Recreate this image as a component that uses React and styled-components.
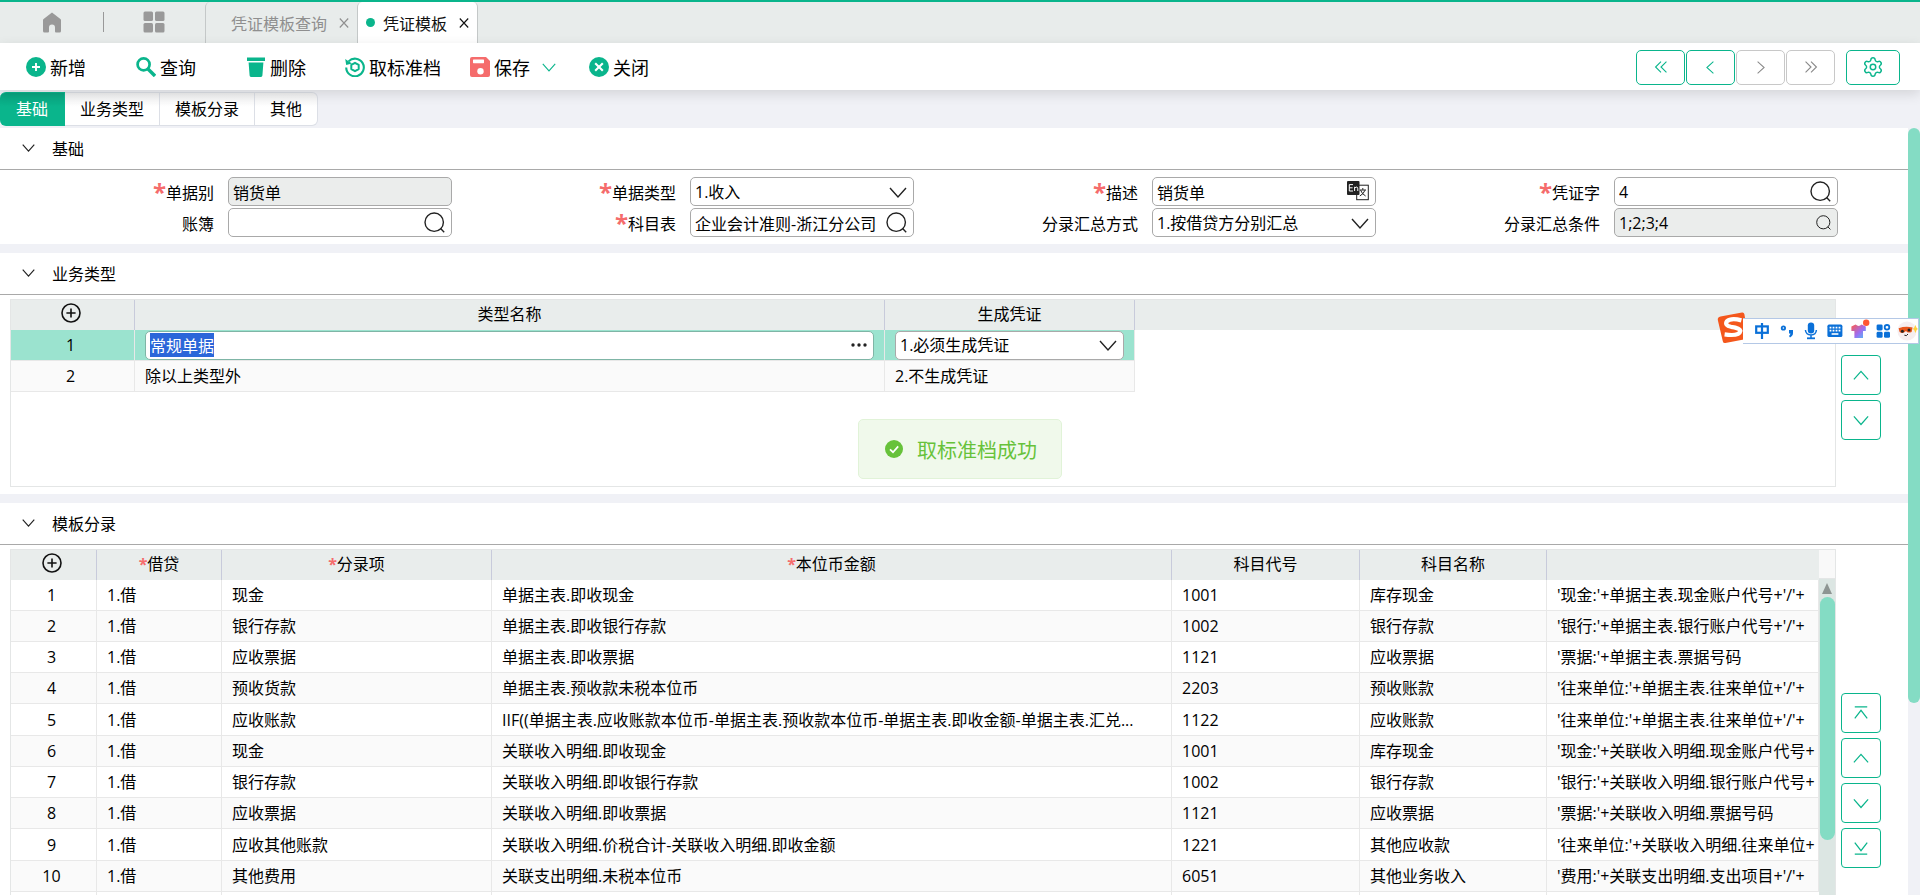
import React, { useEffect, useRef, useState } from "react";
import styled, { createGlobalStyle, css } from "styled-components";
import { Settings } from "lucide-react";

const GREEN = "#0ab58c";
const RED = "#f56c6c";

const anchors = ["基础", "业务类型", "模板分录", "其他"];

const entryRows = [
  ["1.借", "现金", "单据主表.即收现金", "1001", "库存现金", "'现金:'+单据主表.现金账户代号+'/'+"],
  ["1.借", "银行存款", "单据主表.即收银行存款", "1002", "银行存款", "'银行:'+单据主表.银行账户代号+'/'+"],
  ["1.借", "应收票据", "单据主表.即收票据", "1121", "应收票据", "'票据:'+单据主表.票据号码"],
  ["1.借", "预收货款", "单据主表.预收款未税本位币", "2203", "预收账款", "'往来单位:'+单据主表.往来单位+'/'+"],
  [
    "1.借",
    "应收账款",
    "IIF((单据主表.应收账款本位币-单据主表.预收款本位币-单据主表.即收金额-单据主表.汇兑...",
    "1122",
    "应收账款",
    "'往来单位:'+单据主表.往来单位+'/'+",
  ],
  ["1.借", "现金", "关联收入明细.即收现金", "1001", "库存现金", "'现金:'+关联收入明细.现金账户代号+"],
  ["1.借", "银行存款", "关联收入明细.即收银行存款", "1002", "银行存款", "'银行:'+关联收入明细.银行账户代号+"],
  ["1.借", "应收票据", "关联收入明细.即收票据", "1121", "应收票据", "'票据:'+关联收入明细.票据号码"],
  ["1.借", "应收其他账款", "关联收入明细.价税合计-关联收入明细.即收金额", "1221", "其他应收款", "'往来单位:'+关联收入明细.往来单位+"],
  ["1.借", "其他费用", "关联支出明细.未税本位币", "6051", "其他业务收入", "'费用:'+关联支出明细.支出项目+'/'+"],
  ["", "", "", "", "", ""],
];

/* ---------- icons ---------- */

const HomeIcon = () => (
  <svg width="20" height="21" viewBox="0 0 20 21" fill="#999">
    <path d="M10 0.5 L18.4 7 Q19 7.5 19 8.3 V19 Q19 20.5 17.5 20.5 H14 Q13 20.5 13 19.5 V15.5 A3 3 0 0 0 7 15.5 V19.5 Q7 20.5 6 20.5 H2.5 Q1 20.5 1 19 V8.3 Q1 7.5 1.6 7 Z" />
  </svg>
);

const AppsIcon = () => (
  <svg width="22" height="22" viewBox="0 0 22 22" fill="#999">
    <rect x="0.5" y="0.5" width="9.5" height="9.5" rx="1.5" />
    <rect x="12" y="0.5" width="9.5" height="9.5" rx="1.5" />
    <rect x="0.5" y="12" width="9.5" height="9.5" rx="1.5" />
    <rect x="12" y="12" width="9.5" height="9.5" rx="1.5" />
  </svg>
);

const CrossIcon = () => (
  <svg width="10" height="10" viewBox="0 0 10 10" stroke="currentColor" strokeWidth="1.1">
    <path d="M0.8 0.5 L9.2 9.5 M9.2 0.5 L0.8 9.5" />
  </svg>
);

const AddIcon = () => (
  <svg width="20" height="20" viewBox="0 0 20 20">
    <circle cx="10" cy="10" r="10" fill={GREEN} />
    <path d="M10 6 V14 M6 10 H14" stroke="#fff" strokeWidth="1.9" />
  </svg>
);

const FindIcon = () => (
  <svg width="20" height="20" viewBox="0 0 20 20" fill="none" stroke={GREEN}>
    <circle cx="7.6" cy="7.4" r="6" strokeWidth="2.7" />
    <path d="M12 12 L19 19" strokeWidth="3.4" />
  </svg>
);

const TrashIcon = () => (
  <svg width="20" height="20" viewBox="0 0 20 20" fill={GREEN}>
    <path d="M1 0.5 H19 V4 H1 Z M2.6 5.4 H17.4 L16.4 18.6 Q16.3 20 15 20 H5 Q3.7 20 3.6 18.6 Z" />
  </svg>
);

const ResetIcon = () => (
  <svg width="20" height="20" viewBox="0 0 20 20" fill="none" stroke={GREEN}>
    <path d="M3.6 4.4 A8.8 8.8 0 1 1 1.2 10.5" strokeWidth="2.1" />
    <path d="M0.2 2 L1.2 8 L7 6.6 Z" fill={GREEN} stroke="none" />
    <path d="M10 5.8 L13.7 7.9 V12.1 L10 14.2 L6.3 12.1 V7.9 Z" strokeWidth="2" strokeLinejoin="round" />
  </svg>
);

const SaveIcon = () => (
  <svg width="20" height="20" viewBox="0 0 20 20">
    <path d="M2 0 H16 L20 4 V18 Q20 20 18 20 H2 Q0 20 0 18 V2 Q0 0 2 0 Z" fill={RED} />
    <rect x="3" y="2.4" width="11" height="3.8" rx="0.6" fill="#fff" />
    <circle cx="10.5" cy="14.3" r="3.2" fill="#fff" />
  </svg>
);

const CloseIcon = () => (
  <svg width="20" height="20" viewBox="0 0 20 20">
    <circle cx="10" cy="10" r="10" fill={GREEN} />
    <path d="M6.2 6.2 L13.8 13.8 M13.8 6.2 L6.2 13.8" stroke="#fff" strokeWidth="2.1" />
  </svg>
);

const chevrons = {
  down: "M1 5 L9 14 L17 5",
  up: "M1 14 L9 5 L17 14",
  left: "M13 1 L4 9 L13 17",
  right: "M5 1 L14 9 L5 17",
  first: "M9 2 L2 9 L9 16 M16 2 L9 9 L16 16",
  last: "M2 2 L9 9 L2 16 M9 2 L16 9 L9 16",
  top: "M2 2 H16 M2 15 L9 6 L16 15",
  bottom: "M2 16 H16 M2 3 L9 12 L16 3",
};

const Chevron = ({ dir, size = 18, weight = 1.4 }) => (
  <svg width={size} height={size} viewBox="0 0 18 18" fill="none" stroke="currentColor" strokeWidth={weight}>
    <path d={chevrons[dir]} />
  </svg>
);

const LensIcon = ({ size = 21 }) => (
  <svg width={size} height={size} viewBox="0 0 21 21" fill="none" stroke="#222" strokeWidth="1.4">
    <circle cx="10.2" cy="10.2" r="9.2" />
    <path d="M16.6 16.6 L20.2 20.2" />
  </svg>
);

const TranslateIcon = () => (
  <svg width="22" height="24" viewBox="0 0 22 24">
    <rect x="9.7" y="5.2" width="11.6" height="14.5" fill="#fff" stroke="#222" />
    <path d="M15.8 8 V9.8 M12.8 10 H19 M13.6 10.2 Q15 14 18.6 16 M18 10.2 Q16.6 14 12.8 16" stroke="#222" fill="none" />
    <rect y="1" width="12.5" height="14" rx="1" fill="#222" />
    <path d="M6 4.6 H2.3 V11 H6 M2.3 7.8 H5.6 M7.6 11 V6.8 M7.6 8 Q10.8 5.6 10.8 8.8 V11" stroke="#fff" fill="none" />
  </svg>
);

const PlusRing = () => (
  <svg width="20" height="20" viewBox="0 0 20 20" fill="none" stroke="#111" strokeWidth="1.6">
    <circle cx="10" cy="10" r="9" />
    <path d="M10 5.4 V14.6 M5.4 10 H14.6" />
  </svg>
);

const DotsIcon = () => (
  <svg width="16" height="6" viewBox="0 0 16 6" fill="#222">
    <circle cx="2" cy="3" r="1.7" />
    <circle cx="8" cy="3" r="1.7" />
    <circle cx="14" cy="3" r="1.7" />
  </svg>
);

const CheckIcon = () => (
  <svg width="18" height="18" viewBox="0 0 18 18">
    <circle cx="9" cy="9" r="9" fill="#67c23a" />
    <path d="M5 9.4 L8 12.2 L13.2 6.4" stroke="#fff" strokeWidth="1.7" fill="none" />
  </svg>
);

const SogouLogo = () => (
  <svg width="32" height="32" viewBox="0 0 32 32">
    <path d="M3.5 4.6 L25 0.6 Q27 0.3 27.4 2.2 L31 24.6 Q31.3 26.6 29.3 27 L8.4 31 Q6.2 31.3 5.8 29.2 L0.8 8 Q0.4 5.2 3.5 4.6 Z" fill="#f4571c" />
    <path
      d="M24.4 8.4 Q14 5.6 9.8 9.4 Q7.4 13.4 14 14.8 Q22.6 16 23.4 18.8 Q22.4 24.4 7.6 22.4"
      stroke="#fff"
      strokeWidth="4.2"
      fill="none"
    />
  </svg>
);

const ImeIcons = () => (
  <svg width="164" height="24" viewBox="0 0 164 24">
    <g fill="none" stroke="#0a70d8" strokeWidth="2.2">
      <rect x="2.2" y="7.4" width="11.6" height="6.4" />
      <path d="M8 4 V20" />
      <circle cx="29.4" cy="9" r="1.7" strokeWidth="1.8" />
      <path d="M51.4 11 Q52 16 57 16 Q62 16 62.4 11 M57 16 V19.4" strokeWidth="1.5" />
    </g>
    <g fill="#0a70d8">
      <path d="M35 11 H39 V14 Q39 17 36 18.4 L35 17 Q36.4 16 36.4 14.6 H35 Z" />
      <rect x="53.8" y="3.4" width="6.4" height="11" rx="3.2" />
      <rect x="53" y="18.4" width="8" height="1.8" />
      <rect x="73.4" y="5.6" width="15" height="12.4" rx="1.6" />
      <rect x="122.6" y="5.4" width="6" height="6" rx="1.4" />
      <circle cx="133" cy="8.3" r="2.3" fill="none" stroke="#0a70d8" strokeWidth="1.8" />
      <rect x="122.6" y="12.8" width="6" height="6" rx="1.4" />
      <rect x="130" y="12.8" width="6" height="6" rx="1.4" />
    </g>
    <path d="M75.6 8.6 H86.6 M75.6 11.6 H86.6" stroke="#fff" strokeWidth="1.6" strokeDasharray="1.8 1.2" />
    <path d="M77.6 15 H84.4" stroke="#fff" strokeWidth="1.6" />
    <linearGradient id="shirt" x1="0" y1="0" x2="1" y2="1">
      <stop offset="0" stopColor="#ff5a4a" />
      <stop offset="0.55" stopColor="#a06cf0" />
      <stop offset="1" stopColor="#4ac4f8" />
    </linearGradient>
    <path d="M97.4 7.4 L101.6 5.6 Q104.6 8.4 107.6 5.6 L111.8 7.4 V12 H109 V19 H100.4 V12 H97.4 Z" fill="url(#shirt)" />
    <circle cx="112.2" cy="3.8" r="3.2" fill="#ff5533" />
    <circle cx="153" cy="12" r="9.6" fill="#f6eef0" />
    <path d="M144.6 9.2 Q152 6.6 158.6 8.6 L157.6 13 Q153.4 14.4 152 12 Q148.6 15.4 145.6 13 Z" fill="#e8561c" />
    <circle cx="148.4" cy="12.2" r="1.5" fill="#222" />
    <circle cx="155" cy="11" r="1.5" fill="#222" />
    <path d="M150.4 16.2 Q152.6 17.6 154 15" stroke="#222" fill="none" />
    <path d="M161.4 6 L162.6 8.8 L164 10 L162.6 11 L161.4 14 L160.2 11 L158.8 10 L160.2 8.8 Z" fill="#ffd23c" />
  </svg>
);

/* ---------- pieces ---------- */

const Section = ({ title, children }) => (
  <Panel>
    <PanelHead>
      <FoldButton type="button" aria-label={`收起${title}`}>
        <Chevron dir="down" size={13} weight={1.6} />
      </FoldButton>
      <PanelTitle>{title}</PanelTitle>
    </PanelHead>
    {children}
  </Panel>
);

const Field = ({ id, label, required, value, options, icon, disabled }) => (
  <FieldRow>
    <FieldLabel htmlFor={id}>
      {required && <Star>*</Star>}
      {label}
    </FieldLabel>
    <Box $disabled={disabled}>
      {options ? (
        <Select id={id} defaultValue={value}>
          {options.map((option) => (
            <option key={option}>{option}</option>
          ))}
        </Select>
      ) : (
        <Input id={id} defaultValue={value} readOnly={disabled} />
      )}
      {icon}
    </Box>
  </FieldRow>
);

const App = () => {
  const [anchor, setAnchor] = useState("基础");
  const typeInput = useRef(null);

  useEffect(() => {
    typeInput.current.focus();
    typeInput.current.select();
  }, []);

  return (
    <>
      <GlobalStyle />
      <Page>
        <TabBar>
          <HomeButton type="button" aria-label="首页">
            <HomeIcon />
          </HomeButton>
          <Divider />
          <HomeButton type="button" aria-label="应用">
            <AppsIcon />
          </HomeButton>
          <PageTab>
            凭证模板查询
            <TabClose type="button" aria-label="关闭凭证模板查询">
              <CrossIcon />
            </TabClose>
          </PageTab>
          <PageTab $active>
            <Dot />
            凭证模板
            <TabClose type="button" aria-label="关闭凭证模板">
              <CrossIcon />
            </TabClose>
          </PageTab>
        </TabBar>

        <Toolbar>
          <Actions>
            <Action type="button"><AddIcon />新增</Action>
            <Action type="button"><FindIcon />查询</Action>
            <Action type="button"><TrashIcon />删除</Action>
            <Action type="button" $tight><ResetIcon />取标准档</Action>
            <Action type="button" $tight>
              <SaveIcon />保存
              <SaveMore>
                <Chevron dir="down" size={14} />
              </SaveMore>
            </Action>
            <Action type="button"><CloseIcon />关闭</Action>
          </Actions>
          <Pager>
            <PagerButton type="button" aria-label="第一条"><Chevron dir="first" size={14} /></PagerButton>
            <PagerButton type="button" aria-label="上一条"><Chevron dir="left" size={13} /></PagerButton>
            <PagerButton type="button" aria-label="下一条" disabled><Chevron dir="right" size={13} /></PagerButton>
            <PagerButton type="button" aria-label="最后一条" disabled><Chevron dir="last" size={14} /></PagerButton>
          </Pager>
          <PagerButton type="button" aria-label="设置" $wide>
            <Settings size={22} strokeWidth={1.6} />
          </PagerButton>
        </Toolbar>

        <AnchorBar>
          {anchors.map((name) => (
            <Anchor type="button" key={name} $active={name === anchor} onClick={() => setAnchor(name)}>
              {name}
            </Anchor>
          ))}
        </AnchorBar>

        <Body>
          <Main>
            <Section title="基础">
              <Form>
                <Field id="kind" label="单据别" required value="销货单" disabled />
                <Field id="docType" label="单据类型" required value="1.收入" options={["1.收入"]} icon={<Chevron dir="down" />} />
                <Field id="desc" label="描述" required value="销货单" icon={<TranslateIcon />} />
                <Field id="word" label="凭证字" required value="4" icon={<LensIcon />} />
                <Field id="book" label="账簿" value="" icon={<LensIcon />} />
                <Field id="subject" label="科目表" required value="企业会计准则-浙江分公司" icon={<LensIcon />} />
                <Field id="sumMode" label="分录汇总方式" value="1.按借贷方分别汇总" options={["1.按借贷方分别汇总"]} icon={<Chevron dir="down" />} />
                <Field id="sumRule" label="分录汇总条件" value="1;2;3;4" disabled icon={<LensIcon size={15} />} />
              </Form>
            </Section>

            <Section title="业务类型">
              <GridArea>
                <GridBox $height={188}>
                  <GridScroll>
                    <Table>
                      <colgroup>
                        <col width="124" />
                        <col width="750" />
                        <col width="250" />
                        <col />
                      </colgroup>
                      <thead>
                        <tr>
                          <Th $index><RingButton type="button" aria-label="新增业务类型"><PlusRing /></RingButton></Th>
                          <Th>类型名称</Th>
                          <Th>生成凭证</Th>
                          <Th $bare />
                        </tr>
                      </thead>
                      <tbody>
                        <Row $selected>
                          <IndexTd>1</IndexTd>
                          <Td>
                            <Box $focus>
                              <Input ref={typeInput} defaultValue="常规单据" aria-label="类型名称" />
                              <DotsIcon />
                            </Box>
                          </Td>
                          <Td>
                            <Box>
                              <Select aria-label="生成凭证" defaultValue="1.必须生成凭证">
                                <option>1.必须生成凭证</option>
                                <option>2.不生成凭证</option>
                              </Select>
                              <Chevron dir="down" />
                            </Box>
                          </Td>
                          <Td />
                        </Row>
                        <Row>
                          <IndexTd>2</IndexTd>
                          <Td>除以上类型外</Td>
                          <Td>2.不生成凭证</Td>
                          <Td />
                        </Row>
                      </tbody>
                    </Table>
                  </GridScroll>
                </GridBox>
                <Side>
                  <SideButton type="button" aria-label="上移"><Chevron dir="up" size={16} /></SideButton>
                  <SideButton type="button" aria-label="下移"><Chevron dir="down" size={16} /></SideButton>
                </Side>
              </GridArea>
            </Section>

            <Section title="模板分录">
              <GridArea>
                <GridBox $height={454}>
                  <GridScroll>
                    <Table>
                      <colgroup>
                        <col width="86" />
                        <col width="125" />
                        <col width="270" />
                        <col width="680" />
                        <col width="188" />
                        <col width="187" />
                        <col />
                      </colgroup>
                      <thead>
                        <tr>
                          <Th $index><RingButton type="button" aria-label="新增分录"><PlusRing /></RingButton></Th>
                          <Th><SmallStar>*</SmallStar>借贷</Th>
                          <Th><SmallStar>*</SmallStar>分录项</Th>
                          <Th><SmallStar>*</SmallStar>本位币金额</Th>
                          <Th>科目代号</Th>
                          <Th>科目名称</Th>
                          <Th $bare />
                        </tr>
                      </thead>
                      <tbody>
                        {entryRows.map((cells, i) => (
                          <Row key={i}>
                            <IndexTd>{cells[0] && i + 1}</IndexTd>
                            {cells.map((cell, j) => (
                              <Td key={j} $clip={j === 5}>{cell}</Td>
                            ))}
                          </Row>
                        ))}
                      </tbody>
                    </Table>
                  </GridScroll>
                  <Rail>
                    <RailHead />
                    <RailArrow viewBox="0 0 10 11"><path d="M5 0 L10 11 H0 Z" /></RailArrow>
                    <RailThumb />
                  </Rail>
                </GridBox>
                <Side>
                  <SideButton type="button" aria-label="移到最前"><Chevron dir="top" size={16} /></SideButton>
                  <SideButton type="button" aria-label="上移"><Chevron dir="up" size={16} /></SideButton>
                  <SideButton type="button" aria-label="下移"><Chevron dir="down" size={16} /></SideButton>
                  <SideButton type="button" aria-label="移到最后"><Chevron dir="bottom" size={16} /></SideButton>
                </Side>
              </GridArea>
            </Section>
          </Main>
          <PageRail>
            <PageThumb />
          </PageRail>
        </Body>
      </Page>

      <Toast role="status">
        <CheckIcon />
        取标准档成功
      </Toast>

      <ImeBar>
        <SogouLogo />
        <ImePanel>
          <ImeIcons />
        </ImePanel>
      </ImeBar>
    </>
  );
};

/* ---------- styles ---------- */

const GlobalStyle = createGlobalStyle`
  * {
    box-sizing: border-box;
  }
  body {
    margin: 0;
    overflow: hidden;
    background: #f0f1f6;
    color: #000;
  }
  body, button, input, select {
    font-family: "Open Sans", "Noto Sans CJK SC", sans-serif;
    font-size: 16px;
  }
  button {
    padding: 0;
    border: none;
    background: none;
    color: inherit;
    cursor: pointer;
  }
  svg {
    display: block;
    flex-shrink: 0;
  }
  ::selection {
    background: #2b66d9;
    color: #fff;
  }
`;

const Page = styled.div`
  display: flex;
  flex-direction: column;
  height: 100vh;
  overflow: hidden;
  border-top: 2px solid ${GREEN};
`;

const TabBar = styled.div`
  display: flex;
  align-items: center;
  flex-shrink: 0;
  height: 41px;
  padding-bottom: 1px;
  background: #e8eceb;
`;

const HomeButton = styled.button`
  display: flex;
  justify-content: center;
  width: 103px;
`;

const Divider = styled.span`
  width: 1px;
  height: 20px;
  margin-right: -2px;
  background: #999;
`;

const PageTab = styled.div`
  display: flex;
  align-items: center;
  align-self: stretch;
  gap: 12px;
  margin-bottom: -1px;
  padding: 0 8px 0 25px;
  color: #8f8f8f;
  border-left: 1px solid #c4c8c8;
  border-radius: 5px 0 0 0;

  ${({ $active }) =>
    $active &&
    css`
      gap: 8px;
      padding: 0 8px;
      color: #111;
      background: #fff;
      border-right: 1px solid #c4c8c8;
      border-radius: 5px 5px 0 0;
    `}
`;

const Dot = styled.span`
  width: 9px;
  height: 9px;
  border-radius: 50%;
  background: ${GREEN};

  & + button {
    margin-left: 4px;
  }
`;

const TabClose = styled.button``;

const Toolbar = styled.div`
  position: relative;
  display: flex;
  align-items: center;
  flex-shrink: 0;
  height: 47px;
  padding: 1px 20px 0 26px;
  background: #fff;
  box-shadow: 0 4px 12px rgba(0, 0, 0, 0.12);
`;

const Actions = styled.div`
  display: flex;
  align-items: center;
  flex: 1;
`;

const Action = styled.button`
  display: flex;
  align-items: center;
  gap: 4px;
  height: 36px;
  margin-right: 50px;
  font-size: 18px;

  ${({ $tight }) =>
    $tight &&
    css`
      margin-right: 29px;
    `}

  &:nth-child(3) {
    margin-right: 39px;
  }
`;

const SaveMore = styled.span`
  margin-left: 8px;
  margin-right: 4px;
  color: ${GREEN};
`;

const Pager = styled.div`
  display: flex;
  gap: 1px;
  margin-right: 11px;
`;

const PagerButton = styled.button`
  display: flex;
  align-items: center;
  justify-content: center;
  width: ${({ $wide }) => ($wide ? 54 : 49)}px;
  height: 35px;
  color: ${GREEN};
  background: #fff;
  border: 1px solid ${GREEN};
  border-radius: 5px;

  &:disabled {
    color: #888;
    border-color: #c8c8c8;
  }
`;

const AnchorBar = styled.div`
  display: flex;
  flex-shrink: 0;
  padding: 2px 0;
`;

const Anchor = styled.button`
  height: 34px;
  padding: 0 15px 2px;
  background: linear-gradient(#f0f0f1, #fff 14px);
  border: 1px solid #dcdfe6;
  border-left: none;

  &:first-child {
    padding: 0 16px 2px;
    border-radius: 6px 0 0 6px;
  }
  &:last-child {
    border-radius: 0 6px 6px 0;
  }

  ${({ $active }) =>
    $active &&
    css`
      color: #fff;
      background: linear-gradient(#0aa480, ${GREEN} 14px);
      border-color: ${GREEN};
    `}
`;

const Body = styled.div`
  display: flex;
  flex: 1;
  min-height: 0;
`;

const Main = styled.main`
  display: flex;
  flex-direction: column;
  flex: 1;
  gap: 9px;
  min-width: 0;
  overflow: hidden;
`;

const Panel = styled.section`
  flex-shrink: 0;
  background: #fff;
`;

const PanelHead = styled.div`
  display: flex;
  align-items: center;
  gap: 17px;
  height: 42px;
  padding: 0 22px 2px;
  border-bottom: 1px solid #a9a9a9;
`;

const FoldButton = styled.button`
  color: #222;
`;

const PanelTitle = styled.h2`
  margin: 0;
  font-size: 16px;
  font-weight: 400;
`;

const Form = styled.div`
  display: grid;
  grid-template-columns: repeat(4, 1fr);
  row-gap: 2px;
  padding: 7px 60px 7px 0;
`;

const FieldRow = styled.div`
  display: grid;
  grid-template-columns: 1fr 224px;
  gap: 14px;
  align-items: center;
  padding-right: 10px;
`;

const FieldLabel = styled.label`
  display: flex;
  align-items: center;
  justify-content: flex-end;
  height: 29px;
`;

const Star = styled.span`
  color: ${RED};
  font-size: 24px;
  font-weight: 700;
  line-height: 29px;
`;

const SmallStar = styled.span`
  color: ${RED};
  font-weight: 700;
`;

const Box = styled.div`
  display: flex;
  align-items: center;
  gap: 8px;
  height: 29px;
  padding: 0 6px 0 4px;
  background: ${({ $disabled }) => ($disabled ? "#ebedec" : "#fff")};
  border: 1px solid ${({ $focus }) => ($focus ? "#7fb5a6" : "#a9a9a9")};
  border-radius: 5px;
  color: #222;
`;

const fieldText = css`
  flex: 1;
  min-width: 0;
  height: 26px;
  padding: 0;
  color: #000;
  background: transparent;
  border: none;
  outline: none;
`;

const Input = styled.input`
  ${fieldText}
`;

const Select = styled.select`
  ${fieldText}
  appearance: none;
`;

const GridArea = styled.div`
  display: flex;
  gap: 5px;
  padding: 4px 27px 7px 10px;
`;

const GridBox = styled.div`
  display: flex;
  flex: 1;
  min-width: 0;
  height: ${({ $height }) => $height}px;
  border: 1px solid #e4e6e6;
`;

const GridScroll = styled.div`
  flex: 1;
  min-width: 0;
  overflow: hidden;
`;

const Table = styled.table`
  width: 100%;
  table-layout: fixed;
  border-spacing: 0;
`;

const Th = styled.th`
  height: 30px;
  padding: ${({ $index }) => ($index ? "0 4px 4px 0" : "0 0 2px")};
  font-weight: 400;
  line-height: 22px;
  background: #e9edec;
  border-right: ${({ $bare }) => ($bare ? "none" : "1px solid #c8cbdb")};
`;

const RingButton = styled.button`
  display: block;
  margin: 0 auto;
`;

const Td = styled.td`
  height: 31px;
  padding: 0 10px;
  line-height: 22px;
  white-space: nowrap;
  overflow: hidden;
  text-overflow: ellipsis;
  border-right: 1px solid #e8e8e8;
  border-bottom: 1px solid #e8e8e8;

  ${({ $clip }) =>
    $clip &&
    css`
      padding-right: 0;
      text-overflow: clip;
    `}
`;

const IndexTd = styled(Td)`
  padding: 0 14px 0 10px;
  text-align: center;
`;

const Row = styled.tr`
  background: ${({ $selected }) => ($selected ? "#9be3cf" : "#fff")};

  &:nth-child(even) {
    background: #fafafa;
  }

  &:nth-child(4n + 5) td {
    height: 32px;
  }

  td:empty:last-child {
    background: #fff;
    border: none;
  }
`;

const Side = styled.div`
  display: flex;
  flex-direction: column;
  justify-content: center;
  gap: 5px;
  padding-top: 8px;
`;

const SideButton = styled.button`
  display: flex;
  align-items: center;
  justify-content: center;
  width: 40px;
  height: 40px;
  color: ${GREEN};
  background: #fff;
  border: 1px solid ${GREEN};
  border-radius: 4px;
`;

const Rail = styled.div`
  display: flex;
  flex-direction: column;
  align-items: center;
  width: 16px;
  background: #dce6e3;
`;

const RailHead = styled.div`
  align-self: stretch;
  height: 29px;
  background: #f9f9f9;
  border-bottom: 1px solid #e4e6e6;
`;

const RailArrow = styled.svg`
  width: 10px;
  height: 11px;
  margin: 4px 0 3px;
  fill: #8e9593;
`;

const RailThumb = styled.div`
  width: 15px;
  height: 243px;
  background: #84dcc4;
  border-radius: 8px;
`;

const PageRail = styled.div`
  width: 12px;
`;

const PageThumb = styled.div`
  height: 75%;
  background: #84dcc4;
  border-radius: 6px;
`;

const Toast = styled.div`
  position: fixed;
  top: 419px;
  left: 50%;
  transform: translateX(-50%);
  display: flex;
  align-items: center;
  gap: 14px;
  height: 60px;
  padding: 0 24px 0 26px;
  color: #67c23a;
  font-size: 20px;
  white-space: nowrap;
  background: #f0f9eb;
  border: 1px solid #e1f3d8;
  border-radius: 5px;
`;

const ImeBar = styled.div`
  position: fixed;
  top: 312px;
  right: 1px;
  display: flex;
  align-items: center;
`;

const ImePanel = styled.div`
  display: flex;
  align-items: center;
  height: 26px;
  margin: 5px 0 0 -6px;
  padding-left: 11px;
  background: #fff;
  border: 1px solid #b4c8e6;
  border-left: none;
`;

export default App;
